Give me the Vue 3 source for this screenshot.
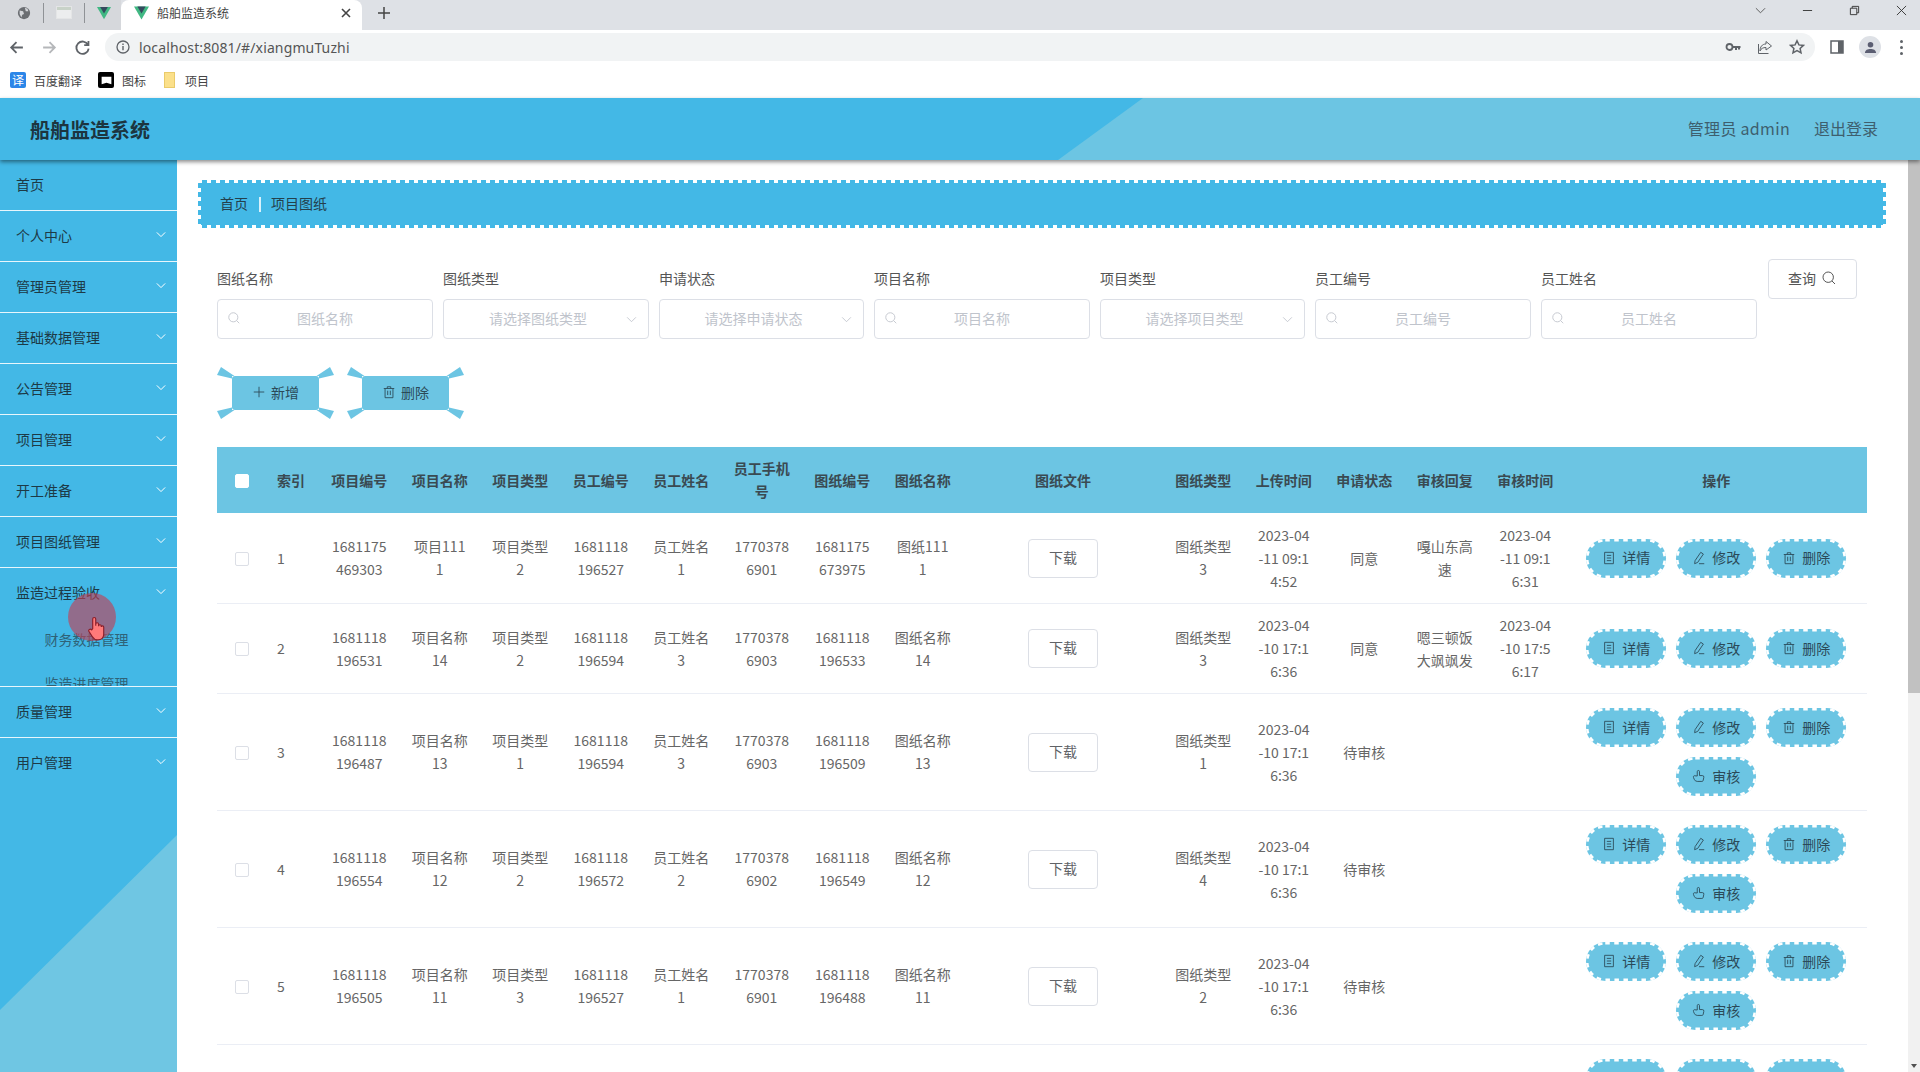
<script setup>
const menus = [
  { name: '首页', plain: true },
  { name: '个人中心' },
  { name: '管理员管理' },
  { name: '基础数据管理' },
  { name: '公告管理' },
  { name: '项目管理' },
  { name: '开工准备' },
  { name: '项目图纸管理' },
  { name: '监造过程验收', subs: ['财务数据管理', '监造进度管理'] },
  { name: '质量管理' },
  { name: '用户管理' },
]

const filters = [
  { label: '图纸名称', holder: '图纸名称', w: 216 },
  { label: '图纸类型', holder: '请选择图纸类型', w: 206, select: true },
  { label: '申请状态', holder: '请选择申请状态', w: 205, select: true },
  { label: '项目名称', holder: '项目名称', w: 216 },
  { label: '项目类型', holder: '请选择项目类型', w: 205, select: true },
  { label: '员工编号', holder: '员工编号', w: 216 },
  { label: '员工姓名', holder: '员工姓名', w: 216 },
]

const paths = {
  search: 'M7.2 2a5.2 5.2 0 1 0 0 10.4a5.2 5.2 0 1 0 0-10.4zM11 11l3 3',
  plus: 'M8 2v12M2 8h12',
  trash: 'M2 4h12M6 4V2h4v2M3.5 4v10.5h9V4M6.5 6.5v5M9.5 6.5v5',
  doc: 'M3 1.5h10v13H3zM5.5 5h5M5.5 8h5M5.5 11h5',
  edit: 'M10 1.5l3 2-6.5 9.5L3 14.5l.5-3.5zM8 14.5h6',
  thumb: 'M6 8V3a1.3 1.3 0 0 1 2.6 0v4.5h3.2a1.7 1.7 0 0 1 1.7 2l-.7 3.5a1.5 1.5 0 0 1-1.5 1.2H6a4 4 0 0 1-3.5-2.5l-.8-2a1.5 1.5 0 0 1 .8-2z',
}

const wings = 'M4 0L0 8l15 3.500V9h2.500zM113 0l4 8-15 3.500V9h-2.500zM4 52L0 44l15-3.500V43h2.500zM113 52l4-8-15-3.500V43h-2.500z'

const heads = ['项目编号', '项目名称', '项目类型', '员工编号', '员工姓名', '员工手机\n号', '图纸编号', '图纸名称']
const heads2 = ['图纸类型', '上传时间', '申请状态', '审核回复', '审核时间']

const rows = [
  {
    a: ['1681175\n469303', '项目111\n1', '项目类型\n2', '1681118\n196527', '员工姓名\n1', '1770378\n6901', '1681175\n673975', '图纸111\n1'],
    b: ['图纸类型\n3', '2023-04\n-11 09:1\n4:52', '同意', '嘎山东高\n速', '2023-04\n-11 09:1\n6:31'],
  },
  {
    a: ['1681118\n196531', '项目名称\n14', '项目类型\n2', '1681118\n196594', '员工姓名\n3', '1770378\n6903', '1681118\n196533', '图纸名称\n14'],
    b: ['图纸类型\n3', '2023-04\n-10 17:1\n6:36', '同意', '嗯三顿饭\n大飒飒发', '2023-04\n-10 17:5\n6:17'],
  },
  {
    audit: true,
    a: ['1681118\n196487', '项目名称\n13', '项目类型\n1', '1681118\n196594', '员工姓名\n3', '1770378\n6903', '1681118\n196509', '图纸名称\n13'],
    b: ['图纸类型\n1', '2023-04\n-10 17:1\n6:36', '待审核', '', ''],
  },
  {
    audit: true,
    a: ['1681118\n196554', '项目名称\n12', '项目类型\n2', '1681118\n196572', '员工姓名\n2', '1770378\n6902', '1681118\n196549', '图纸名称\n12'],
    b: ['图纸类型\n4', '2023-04\n-10 17:1\n6:36', '待审核', '', ''],
  },
  {
    audit: true,
    a: ['1681118\n196505', '项目名称\n11', '项目类型\n3', '1681118\n196527', '员工姓名\n1', '1770378\n6901', '1681118\n196488', '图纸名称\n11'],
    b: ['图纸类型\n2', '2023-04\n-10 17:1\n6:36', '待审核', '', ''],
  },
  // next row only shows the top of its buttons above the fold
  { audit: true, ghost: true, a: Array(8).fill(''), b: Array(5).fill('') },
]
</script>

<template>
  <div class="screen">
    <!-- browser chrome -->
    <div class="tabbar">
      <div class="pinned">
        <svg class="pin-ic" viewBox="0 0 16 16"><circle cx="8" cy="8" r="7" fill="#6b6e72" /><path d="M3 5l4 1 1 3-2 1-1 3-2-4zM9 2l3 1 1 3-3 0z" fill="#d3d5d9" /></svg>
        <i class="tab-sep"></i>
        <span class="win-ic"></span>
        <i class="tab-sep"></i>
        <svg class="pin-ic" viewBox="0 0 16 14"><path d="M0 0h16L8 14z" fill="#41b883" /><path d="M3.6 0h8.8L8 7.6z" fill="#35495e" /></svg>
      </div>
      <div class="tab">
        <svg class="tab-logo" viewBox="0 0 16 14"><path d="M0 0h16L8 14z" fill="#41b883" /><path d="M3.6 0h8.8L8 7.6z" fill="#35495e" /></svg>
        <span class="tab-title">船舶监造系统</span>
        <svg class="tab-x" viewBox="0 0 10 10"><path d="M1 1l8 8M9 1l-8 8" stroke="#444" stroke-width="1.6" /></svg>
      </div>
      <svg class="tab-plus" viewBox="0 0 12 12"><path d="M6 0v12M0 6h12" stroke="#444" stroke-width="1.5" /></svg>
      <div class="win-btns">
        <svg viewBox="0 0 12 12" class="win-chev"><path d="M1 3.5l5 5 5-5" fill="none" stroke="#555" /></svg>
        <svg viewBox="0 0 12 12" class="win-min"><path d="M1 6h10" stroke="#333" /></svg>
        <svg viewBox="0 0 12 12" class="win-res"><path d="M1.5 3.5h7v7h-7zM3.5 3.5v-2h7v7h-2" fill="none" stroke="#333" /></svg>
        <svg viewBox="0 0 12 12" class="win-close"><path d="M1 1l10 10M11 1L1 11" stroke="#333" /></svg>
      </div>
    </div>
    <div class="toolbar">
      <svg class="nav" viewBox="0 0 16 16"><path d="M14 8H3M8 3L3 8l5 5" fill="none" stroke="#5f6368" stroke-width="1.7" /></svg>
      <svg class="nav" viewBox="0 0 16 16"><path d="M2 8h11M8 3l5 5-5 5" fill="none" stroke="#b5b7ba" stroke-width="1.7" /></svg>
      <svg class="nav" viewBox="0 0 16 16"><path d="M13.2 5.5A5.8 5.8 0 1 0 13.8 9M13.6 1.8v4h-4" fill="none" stroke="#5f6368" stroke-width="1.7" /></svg>
      <div class="url-pill">
        <svg class="info" viewBox="0 0 14 14"><circle cx="7" cy="7" r="6" fill="none" stroke="#5f6368" stroke-width="1.3" /><path d="M7 6v4.2M7 3.6v1.4" stroke="#5f6368" stroke-width="1.4" /></svg>
        <span class="url-text">localhost:8081/#/xiangmuTuzhi</span>
        <div class="url-tools">
          <svg viewBox="0 0 16 16"><circle cx="4.5" cy="8" r="3" fill="none" stroke="#5f6368" stroke-width="1.8" /><path d="M7 8h8.5M11 8v3M14 8v2.5" stroke="#5f6368" stroke-width="2" /></svg>
          <svg viewBox="0 0 16 16"><path d="M9 2.5l5.5 4.5L9 11V8.5C6 8.5 4 9.500 3 12c0-4 2-7 6-7zM1.500 5v9.500h10" fill="none" stroke="#5f6368" stroke-width="1" /></svg>
          <svg viewBox="0 0 16 16"><path d="M8 1.800l1.900 4.100 4.500.5-3.300 3 .9 4.400L8 11.600l-4 2.200.9-4.400-3.300-3 4.500-.5z" fill="none" stroke="#5f6368" stroke-width="1.500" /></svg>
        </div>
      </div>
      <svg class="panel" viewBox="0 0 14 14"><path d="M1 1h12v12H1z" fill="none" stroke="#5f6368" stroke-width="1.500" /><path d="M8 1h5v12H8z" fill="#5f6368" /></svg>
      <span class="avatar">
        <svg viewBox="0 0 14 14"><circle cx="7" cy="4" r="3" fill="#5b5e72" /><path d="M1 13c0-3.500 3-4.500 6-4.500s6 1 6 4.500z" fill="#5b5e72" /></svg>
      </span>
      <span class="dots"><i></i><i></i><i></i></span>
    </div>
    <div class="bookmarks">
      <span class="bm-ic bm-blue">译</span><span class="bm-text bm-first">百度翻译</span>
      <span class="bm-ic bm-black"><svg viewBox="0 0 12 12"><path d="M1.500 2.500h9v7L6 8l-4.500 1.500z" fill="#fff" /></svg></span><span class="bm-text">图标</span>
      <span class="bm-folder"></span><span class="bm-text">项目</span>
    </div>

    <!-- page -->
    <header class="topbar">
      <h1 class="brand">船舶监造系统</h1>
      <div class="user">
        <span class="who">管理员 admin</span>
        <span>退出登录</span>
      </div>
    </header>

    <div class="body">
      <aside class="side">
        <div v-for="m in menus" :key="m.name" class="menu" :class="{ open: m.subs }">
          <div class="menu-title">
            <span>{{ m.name }}</span>
            <svg v-if="!m.plain" class="chev" viewBox="0 0 12 8"><path d="M1 1.500l5 5 5-5" fill="none" stroke="#fff" stroke-width="1.200" /></svg>
          </div>
          <div v-for="s in m.subs" :key="s" class="sub">{{ s }}</div>
        </div>
        <!-- recorded mouse pointer -->
        <div class="pointer">
          <svg viewBox="0 0 20 26"><path d="M6 13V3a1.600 1.600 0 0 1 3.200 0v7V8.500a1.500 1.500 0 0 1 3 0V10.500a1.400 1.400 0 0 1 2.800 0v1a1.300 1.300 0 0 1 2.600 0V19c0 3.500-2.500 6-6 6H11c-2.500 0-4-1-5.500-3.500L2 16c-1-1.800 1.500-3.200 3-1.500z" fill="#ff7a7a" stroke="#8a1f2b" stroke-width="1.200" /></svg>
        </div>
      </aside>

      <main class="main">
        <div class="crumb">
          <span>首页</span>
          <i class="crumb-sep"></i>
          <span>项目图纸</span>
        </div>

        <div class="filters">
          <div v-for="f in filters" :key="f.label" class="field" :style="{ width: f.w + 'px' }">
            <label class="field-label">{{ f.label }}</label>
            <div class="input-wrap" :class="{ select: f.select }">
              <svg v-if="!f.select" class="ic prefix" viewBox="0 0 16 16"><path :d="paths.search" /></svg>
              <input class="input" readonly :placeholder="f.holder" />
              <svg v-if="f.select" class="suffix" viewBox="0 0 12 8"><path d="M1 1.500l5 5 5-5" fill="none" stroke="#c0c4cc" stroke-width="1" /></svg>
            </div>
          </div>
          <button class="query">查询<svg class="ic big" viewBox="0 0 16 16"><path :d="paths.search" /></svg></button>
        </div>

        <div class="actions">
          <button class="act">
            <svg class="wings" viewBox="0 0 117 52"><path :d="wings" /></svg>
            <svg class="ic" viewBox="0 0 16 16"><path :d="paths.plus" /></svg>新增
          </button>
          <button class="act">
            <svg class="wings" viewBox="0 0 117 52"><path :d="wings" /></svg>
            <svg class="ic" viewBox="0 0 16 16"><path :d="paths.trash" /></svg>删除
          </button>
        </div>

        <table class="grid">
          <colgroup>
            <col style="width: 50px" />
            <col style="width: 52px" />
            <col v-for="h in heads" :key="h" style="width: 80.5px" />
            <col style="width: 200px" />
            <col v-for="h in heads2" :key="h" style="width: 80.5px" />
            <col />
          </colgroup>
          <thead>
            <tr>
              <th><span class="check white"></span></th>
              <th class="idx">索引</th>
              <th v-for="h in heads" :key="h">{{ h }}</th>
              <th>图纸文件</th>
              <th v-for="h in heads2" :key="h">{{ h }}</th>
              <th>操作</th>
            </tr>
          </thead>
          <tbody>
            <tr v-for="(r, i) in rows" :key="i" :class="{ tall: r.audit }">
              <td><span class="check"></span></td>
              <td class="idx">{{ r.ghost ? '' : i + 1 }}</td>
              <td v-for="(c, k) in r.a" :key="k">{{ c }}</td>
              <td><button v-if="!r.ghost" class="down">下载</button></td>
              <td v-for="(c, k) in r.b" :key="k">{{ c }}</td>
              <td class="ops">
                <div class="op-wrap">
                  <template v-if="!r.ghost">
                    <button class="op"><svg class="edge" viewBox="0 0 80 39"><rect x="1.25" y="1.25" width="77.5" height="36.5" rx="18" /></svg><svg class="ic" viewBox="0 0 16 16"><path :d="paths.doc" /></svg>详情</button>
                    <button class="op"><svg class="edge" viewBox="0 0 80 39"><rect x="1.25" y="1.25" width="77.5" height="36.5" rx="18" /></svg><svg class="ic" viewBox="0 0 16 16"><path :d="paths.edit" /></svg>修改</button>
                    <button class="op"><svg class="edge" viewBox="0 0 80 39"><rect x="1.25" y="1.25" width="77.5" height="36.5" rx="18" /></svg><svg class="ic" viewBox="0 0 16 16"><path :d="paths.trash" /></svg>删除</button>
                    <button v-if="r.audit" class="op"><svg class="edge" viewBox="0 0 80 39"><rect x="1.25" y="1.25" width="77.5" height="36.5" rx="18" /></svg><svg class="ic" viewBox="0 0 16 16"><path :d="paths.thumb" /></svg>审核</button>
                  </template>
                  <template v-else>
                    <button v-for="n in 3" :key="n" class="op"><svg class="edge" viewBox="0 0 80 39"><rect x="1.25" y="1.25" width="77.5" height="36.5" rx="18" /></svg></button>
                  </template>
                </div>
              </td>
            </tr>
          </tbody>
        </table>
      </main>

      <div class="scrollbar">
        <div class="thumb"></div>
        <i class="arrow"></i>
      </div>
    </div>
  </div>
</template>

<style scoped>
.screen {
  width: 1920px;
  height: 1072px;
  display: flex;
  flex-direction: column;
  overflow: hidden;
  font-family: "Noto Sans CJK SC", "Noto Sans", sans-serif;
  font-size: 14px;
  background: #fff;
}

/* browser chrome */
.tabbar {
  height: 30px;
  flex: none;
  display: flex;
  align-items: center;
  background: #dee1e6;
}
.pinned {
  width: 121px;
  height: 30px;
  display: flex;
  align-items: center;
  padding: 0 0 5px 17px;
  box-sizing: border-box;
  background: #d6d8dc;
}
.pin-ic {
  width: 14px;
  height: 14px;
}
.tab-sep {
  width: 1px;
  height: 20px;
  margin: 0 12px;
  background: #8f9296;
}
.win-ic {
  width: 14px;
  height: 11px;
  background: linear-gradient(#c8d2c8 3px, #ecedee 3px);
  border: 1px solid #e4e5e6;
}
.tab {
  width: 241px;
  height: 30px;
  display: flex;
  align-items: center;
  padding: 0 0 5px 13px;
  box-sizing: border-box;
  background: #fff;
  border-radius: 8px 8px 0 0;
}
.tab-logo {
  width: 15px;
  height: 14px;
}
.tab-title {
  margin-left: 8px;
  font-size: 12px;
  color: #444;
  width: 184px;
}
.tab-x {
  width: 10px;
  height: 10px;
}
.tab-plus {
  width: 12px;
  height: 12px;
  margin: 0 0 5px 16px;
}
.win-btns {
  margin: 0 0 10px auto;
  display: flex;
  align-items: center;
  padding-right: 13px;
  gap: 36px;
}
.win-btns svg {
  width: 11px;
  height: 11px;
}
.toolbar {
  height: 34px;
  flex: none;
  display: flex;
  align-items: center;
  padding-left: 8px;
  box-sizing: border-box;
  background: #fff;
}
.nav {
  width: 17px;
  height: 17px;
  margin-right: 16px;
}
.url-pill {
  margin-left: -2px;
  width: 1710px;
  height: 28px;
  display: flex;
  align-items: center;
  padding-left: 11px;
  box-sizing: border-box;
  background: #f1f3f4;
  border-radius: 14px;
}
.info {
  width: 14px;
  height: 14px;
}
.url-text {
  margin-left: 9px;
  font-family: "Noto Sans", sans-serif;
  font-size: 14px;
  letter-spacing: 0.13px;
  color: #555;
}
.url-tools {
  margin-left: auto;
  display: flex;
  gap: 16px;
  padding-right: 10px;
}
.url-tools svg {
  width: 16px;
  height: 16px;
}
.panel {
  width: 14px;
  height: 14px;
  margin-left: 15px;
}
.avatar {
  width: 22px;
  height: 22px;
  margin-left: 15px;
  border-radius: 50%;
  background: #dee1e6;
  display: flex;
  align-items: center;
  justify-content: center;
}
.avatar svg {
  width: 13px;
  height: 13px;
}
.dots {
  margin-left: 19px;
  display: flex;
  flex-direction: column;
  gap: 3px;
}
.dots i {
  width: 3px;
  height: 3px;
  border-radius: 50%;
  background: #5f6368;
}
.bookmarks {
  height: 34px;
  flex: none;
  display: flex;
  align-items: center;
  padding: 0 0 2px 10px;
  box-sizing: border-box;
  background: #fff;
}
.bm-ic {
  width: 16px;
  height: 16px;
  border-radius: 2px;
  display: flex;
  align-items: center;
  justify-content: center;
}
.bm-blue {
  background: #2b86e8;
  color: #fff;
  font-size: 12px;
  line-height: 16px;
}
.bm-black {
  background: #000;
}
.bm-black svg {
  width: 13px;
  height: 13px;
}
.bm-folder {
  width: 11px;
  height: 16px;
  background: #fbe08a;
  border: 1px solid #eacb6a;
  box-sizing: border-box;
}
.bm-text {
  margin: 0 18px 0 8px;
  font-size: 12px;
  color: #444;
}
.bm-first {
  margin-right: 16px;
}
.bm-text:last-child {
  margin-left: 10px;
}

/* page header */
.topbar {
  position: relative;
  z-index: 2;
  height: 62px;
  flex: none;
  display: flex;
  align-items: center;
  justify-content: space-between;
  padding: 0 42px 0 30px;
  background: #43b8e6;
  box-shadow: 0 2px 4px rgba(0, 0, 0, 0.45);
}
.topbar::after {
  content: "";
  position: absolute;
  inset: 0;
  background: #6cc5e3;
  clip-path: polygon(1143px 0, 100% 0, 100% 100%, 1058px 100%);
}
.brand {
  position: relative;
  z-index: 1;
  margin: 0;
  font-size: 20px;
  font-weight: 700;
  color: #1c3540;
}
.user {
  position: relative;
  z-index: 1;
  display: flex;
  gap: 24px;
  padding-bottom: 2px;
  font-size: 16px;
  color: #3e5f6e;
}
.who {
  letter-spacing: 0.3px;
}

.body {
  flex: 1;
  min-height: 0;
  display: flex;
}

/* sidebar */
.side {
  position: relative;
  width: 177px;
  flex: none;
  background: #43b8e6;
}
.side::before {
  content: "";
  position: absolute;
  inset: 0;
  background: #6fc6e3;
  clip-path: polygon(100% 675px, 100% 100%, 0 100%, 0 850px);
}
.menu {
  position: relative;
  height: 51px;
  box-sizing: border-box;
  border-bottom: 1px solid #e8f6fc;
  overflow: hidden;
  color: #1d3a46;
}
.menu:nth-last-child(2) {
  border-bottom: 0;
}
.menu.open {
  height: 119px;
}
.menu-title {
  height: 47px;
  margin-bottom: 2px;
  display: flex;
  align-items: center;
  justify-content: space-between;
  padding: 0 11px 0 16px;
}
.chev {
  width: 10px;
  height: 7px;
}
.sub {
  height: 44px;
  line-height: 44px;
  padding-right: 4px;
  text-align: center;
  color: #2f6277;
}
.pointer {
  position: absolute;
  left: 68px;
  top: 433px;
  width: 48px;
  height: 48px;
  border-radius: 50%;
  background: rgba(196, 62, 82, 0.62);
}
.pointer svg {
  position: absolute;
  left: 19px;
  top: 23px;
  width: 19px;
  height: 25px;
}

/* main */
.main {
  flex: 1;
  min-width: 0;
  overflow: hidden;
  padding: 20px 22px 0 21px;
}
.crumb {
  height: 48px;
  box-sizing: border-box;
  display: flex;
  align-items: center;
  padding: 0 0 2px 22px;
  border-radius: 4px;
  color: #24404c;
  background-color: #43b8e6;
  background-image:
    repeating-linear-gradient(90deg, #fff 0 4.5px, transparent 4.5px 9px),
    repeating-linear-gradient(90deg, #fff 0 4.5px, transparent 4.5px 9px),
    repeating-linear-gradient(0deg, #fff 0 4.5px, transparent 4.5px 9px),
    repeating-linear-gradient(0deg, #fff 0 4.5px, transparent 4.5px 9px);
  background-size: 100% 3px, 100% 3px, 3px 100%, 3px 100%;
  background-position: 0 0, 0 100%, 0 0, 100% 0;
  background-repeat: no-repeat;
}
.crumb-sep {
  width: 2px;
  height: 15px;
  margin: 2px 10px 0 11px;
  background: #d9f1fb;
}
.filters {
  display: flex;
  gap: 10px;
  margin: 31px 0 0 19px;
}
.field-label {
  display: block;
  height: 38px;
  line-height: 38px;
  margin-bottom: 2px;
  color: #555;
}
.input-wrap {
  position: relative;
  height: 40px;
}
.input {
  width: 100%;
  height: 40px;
  padding: 0 0 2px;
  box-sizing: border-box;
  border: 1px solid #dcdfe6;
  border-radius: 4px;
  outline: none;
  text-align: center;
  font: inherit;
  color: #606266;
  background: #fff;
}
.input::placeholder {
  color: #c0c4cc;
}
.select .input {
  padding: 0 16px 2px 0;
}
.prefix {
  position: absolute;
  left: 10px;
  top: 12px;
  width: 16px;
  height: 16px;
  color: #c0c4cc;
}
.suffix {
  position: absolute;
  right: 12px;
  top: 17px;
  width: 11px;
  height: 7px;
}
.ic {
  width: 14px;
  height: 14px;
  flex: none;
  fill: none;
  stroke: currentColor;
  stroke-width: 1;
}
.ic.big {
  width: 16px;
  height: 16px;
}
button {
  font: inherit;
  cursor: pointer;
}
.query {
  width: 89px;
  height: 40px;
  margin-left: 1px;
  display: flex;
  align-items: center;
  justify-content: center;
  gap: 5px;
  padding: 0 0 2px;
  background: #fff;
  border: 1px solid #dcdfe6;
  border-radius: 4px;
  color: #555;
}
.actions {
  display: flex;
  gap: 13px;
  margin: 37px 0 0 19px;
}
.act {
  position: relative;
  width: 87px;
  height: 34px;
  margin: 0 15px;
  padding: 0 0 2px;
  display: flex;
  align-items: center;
  justify-content: center;
  gap: 5px;
  background: #6cc5e3;
  border: 0;
  border-radius: 3px;
  color: #2b4a58;
}
.wings {
  position: absolute;
  left: -15px;
  top: -9px;
  width: 117px;
  height: 52px;
  fill: #6cc5e3;
}

/* table */
.grid {
  width: 1650px;
  margin: 37px 0 0 19px;
  table-layout: fixed;
  border-collapse: separate;
  border-spacing: 0;
}
th {
  height: 66px;
  padding: 0 12px;
  box-sizing: border-box;
  background: #6cc5e3;
  color: #3a4a52;
  font-weight: 600;
  line-height: 23px;
  white-space: pre-line;
  text-align: center;
}
td {
  height: 90px;
  padding: 0 12px;
  box-sizing: border-box;
  border-bottom: 1px solid #ebeef5;
  color: #666;
  line-height: 23px;
  white-space: pre-line;
  text-align: center;
}
tbody tr:first-child td {
  height: 91px;
}
tr.tall td {
  height: 117px;
}
.idx {
  padding: 0 0 0 10px;
  text-align: left;
}
.check {
  display: inline-block;
  width: 14px;
  height: 14px;
  box-sizing: border-box;
  border: 1px solid #dcdfe6;
  border-radius: 2px;
  background: #fff;
  vertical-align: -2px;
}
.check.white {
  border-color: #fff;
}
.down {
  width: 70px;
  height: 39px;
  padding: 0 0 2px;
  background: #fff;
  border: 1px solid #dcdfe6;
  border-radius: 4px;
  color: #606266;
}
.ops {
  padding: 0;
  vertical-align: top;
}
tbody tr:not(.tall) .ops {
  vertical-align: middle;
}
tr.tall .op-wrap {
  padding-top: 14px;
}
.op-wrap {
  display: flex;
  flex-wrap: wrap;
  justify-content: center;
  gap: 10px;
  white-space: normal;
}
.op {
  position: relative;
  width: 80px;
  height: 39px;
  padding: 0 0 1px;
  display: flex;
  align-items: center;
  justify-content: center;
  gap: 6px;
  background: #6cc5e3;
  border: 0;
  border-radius: 20px;
  color: #2b4a58;
}
.edge {
  position: absolute;
  inset: 0;
  width: 80px;
  height: 39px;
  fill: none;
  stroke: #fff;
  stroke-width: 2.5;
  stroke-dasharray: 4.5 4.5;
}

/* fake window scrollbar */
.scrollbar {
  position: relative;
  width: 12px;
  flex: none;
  background: #f1f1f1;
}
.thumb {
  height: 533px;
  background: #c1c1c1;
}
.arrow {
  position: absolute;
  left: 3px;
  bottom: 4px;
  border-style: solid;
  border-width: 4px 3.5px 0;
  border-color: #505050 transparent transparent;
}
</style>

<style>
html,
body {
  margin: 0;
  overflow: hidden;
}
</style>
